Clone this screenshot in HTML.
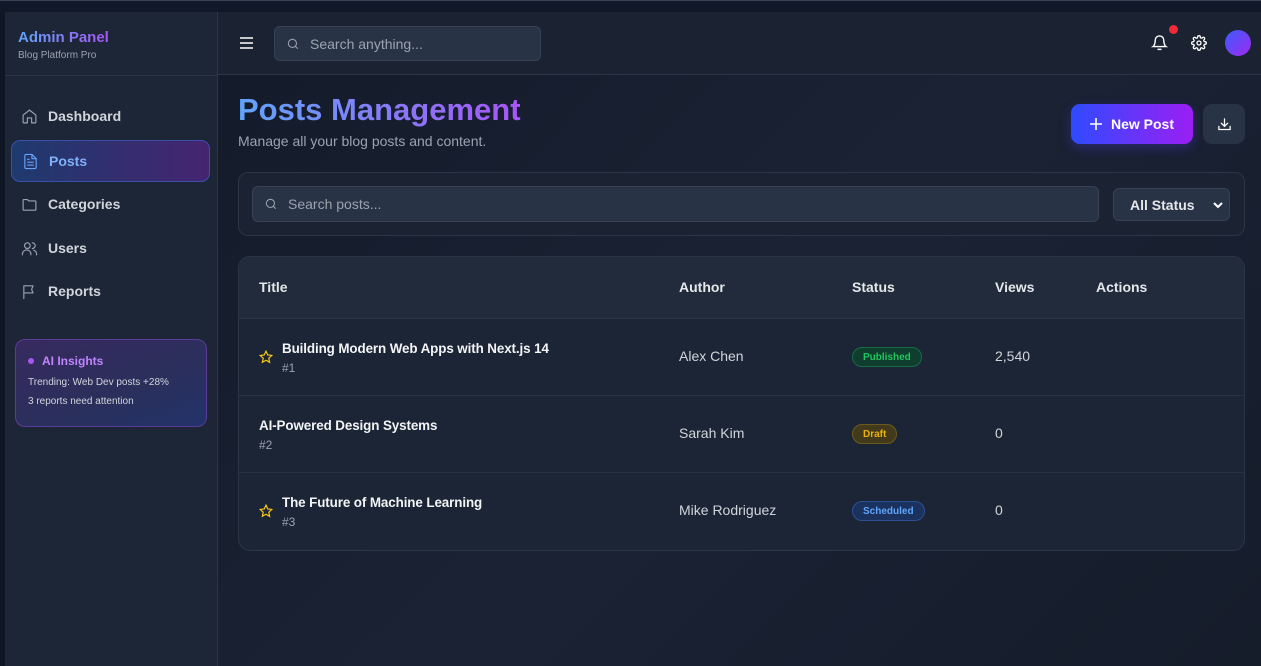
<!DOCTYPE html>
<html><head><meta charset="utf-8"><style>
*{box-sizing:border-box;margin:0;padding:0}
body{width:1261px;height:666px;overflow:hidden;background:#0f1624;font-family:"Liberation Sans",sans-serif;position:relative;color:#e5e7eb}
.top{position:absolute;left:0;top:0;width:1261px;height:12px;background:#111827;border-top:1px solid #3a4356}
.side{position:absolute;left:5px;top:12px;width:213px;height:654px;background:#1d2636;border-right:1px solid #2b3546}
.brand{height:64px;border-bottom:1px solid #2b3546;padding:17px 13px}
.brand h1{font-size:15px;font-weight:bold;background:linear-gradient(90deg,#60a5fa,#a855f7);-webkit-background-clip:text;color:transparent;display:inline-block}
.brand p{font-size:10px;color:#9ca3af;margin-top:3px}
.nav{position:absolute;left:6px;width:199px;height:42px;display:flex;align-items:center;padding-left:10px;font-size:14px;font-weight:bold;color:#d1d5db}
.nav svg{width:17px;height:17px;margin-right:10px;stroke:#9ca3af;fill:none;stroke-width:1.6;stroke-linecap:round;stroke-linejoin:round}
.nav.act{background:linear-gradient(90deg,#1e3a6e,#452470);border:1px solid #3b4fa8;border-radius:9px;color:#7fb0f8}
.nav.act svg{stroke:#6aa2f5}
.ai{position:absolute;left:10px;top:327px;width:192px;height:88px;border:1px solid #5b3a9a;border-radius:10px;background:linear-gradient(160deg,#372a5e,#2a2f5c 60%,#22336a);padding:14px 12px}
.ai b{font-size:12px;color:#c084fc;display:flex;align-items:center}
.ai b:before{content:"";width:6px;height:6px;border-radius:50%;background:#a855f7;margin-right:8px}
.ai p{font-size:10px;color:#d1d5db;margin-top:9px}
.ai p+p{margin-top:8px}
.head{position:absolute;left:218px;top:12px;width:1043px;height:63px;background:#1b2332;border-bottom:1px solid #2b3546}
.srch{position:absolute;background:#283345;border:1px solid #374256;border-radius:6px;display:flex;align-items:center;color:#9ca3af;font-size:14px}
.srch svg{width:14px;height:14px;stroke:#9ca3af;fill:none;stroke-width:1.8;margin:0 10px 0 11px}
.main{position:absolute;left:218px;top:75px;width:1043px;height:591px;background:linear-gradient(135deg,#141c2b,#1a2234 50%,#151c2a)}
h2{position:absolute;left:20px;top:17px;font-size:31px;font-weight:bold;background:linear-gradient(90deg,#60a5fa,#a855f7);-webkit-background-clip:text;color:transparent}
.sub{position:absolute;left:20px;top:58px;font-size:14px;color:#9ca3af}
.btn{position:absolute;left:853px;top:29px;width:122px;height:40px;border-radius:9px;background:linear-gradient(90deg,#2e4bff,#9b1ff3);color:#fff;font-size:14px;font-weight:bold;display:flex;align-items:center;justify-content:center;box-shadow:0 4px 12px rgba(80,60,255,.3)}
.dl{position:absolute;left:985px;top:29px;width:42px;height:40px;border-radius:9px;background:#283345;display:flex;align-items:center;justify-content:center}
.filt{position:absolute;left:20px;top:97px;width:1007px;height:64px;border:1px solid #2b3546;border-radius:10px;background:#1b2332}
.sel{position:absolute;left:874px;top:15px;width:117px;height:33px;background:#283345;border:1px solid #374256;border-radius:6px;font-size:14px;font-weight:bold;color:#e5e7eb;padding:8px 16px}
.tbl{position:absolute;left:20px;top:181px;width:1007px;height:295px;border:1px solid #2b3546;border-radius:12px;background:#1c2535;overflow:hidden}
.th{height:62px;background:#212b3b;border-bottom:1px solid #2b3546;position:relative}
.th span{position:absolute;top:22px;font-size:14px;font-weight:bold;color:#e5e7eb}
.row{height:77px;border-bottom:1px solid #28323f;position:relative}
.row:last-child{border:0}
.t{position:absolute;top:22px;font-size:13.4px;font-weight:bold;color:#f3f4f6;letter-spacing:-.1px}
.t small{display:block;font-size:12px;color:#9ca3af;font-weight:normal;margin-top:5px}
.a{position:absolute;left:440px;top:29px;font-size:14px;color:#d1d5db}
.v{position:absolute;left:756px;top:29px;font-size:14px;color:#d1d5db}
.b{position:absolute;left:613px;top:28px;height:20px;border-radius:10px;font-size:10px;font-weight:bold;padding:4px 10px}
.star{position:absolute;left:20px;top:31px;width:14px;height:14px}
</style></head><body>
<div class="top"></div>
<div class="side">
 <div class="brand"><h1>Admin Panel</h1><p>Blog Platform Pro</p></div>
 <div class="nav" style="top:83px"><svg viewBox="0 0 24 24"><path d="M3 10l9-7 9 7v10a1 1 0 01-1 1h-5v-7H9v7H4a1 1 0 01-1-1z"/></svg>Dashboard</div>
 <div class="nav act" style="top:128px"><svg viewBox="0 0 24 24"><path d="M14 2H6a2 2 0 00-2 2v16a2 2 0 002 2h12a2 2 0 002-2V8z"/><path d="M14 2v6h6M8 13h8M8 17h8M8 9h2"/></svg>Posts</div>
 <div class="nav" style="top:171px"><svg viewBox="0 0 24 24"><path d="M3 6a1 1 0 011-1h5l2 2h9a1 1 0 011 1v11a1 1 0 01-1 1H4a1 1 0 01-1-1z"/></svg>Categories</div>
 <div class="nav" style="top:215px"><svg viewBox="0 0 24 24"><circle cx="9" cy="8" r="4"/><path d="M2 21v-1a6 6 0 0112 0v1M16 4a4 4 0 010 8M22 21v-1a6 6 0 00-4-5.6"/></svg>Users</div>
 <div class="nav" style="top:258px"><svg viewBox="0 0 24 24"><path d="M4 22V4M4 4h13l-2 5 2 5H4"/></svg>Reports</div>
 <div class="ai"><b>AI Insights</b><p>Trending: Web Dev posts +28%</p><p>3 reports need attention</p></div>
</div>
<div class="head">
 <svg style="position:absolute;left:22px;top:25px" width="13" height="12" viewBox="0 0 13 12" stroke="#fff" stroke-width="1.6"><path d="M0 1h13M0 6h13M0 11h13"/></svg>
 <div class="srch" style="left:56px;top:14px;width:267px;height:35px"><svg viewBox="0 0 24 24"><circle cx="11" cy="11" r="7"/><path d="M20 20l-4-4"/></svg>Search anything...</div>
 <svg style="position:absolute;left:933px;top:22px" width="17" height="18" viewBox="0 0 24 24" fill="none" stroke="#fff" stroke-width="2" stroke-linecap="round"><path d="M6 8a6 6 0 0112 0c0 7 3 9 3 9H3s3-2 3-9M10 21h4"/></svg>
 <div style="position:absolute;left:951px;top:13px;width:9px;height:9px;border-radius:50%;background:#ef2b3a"></div>
 <svg style="position:absolute;left:973px;top:23px" width="16" height="16" viewBox="0 0 24 24" fill="none" stroke="#fff" stroke-width="2"><circle cx="12" cy="12" r="3"/><path d="M19.4 15a1.7 1.7 0 00.3 1.8l.1.1a2 2 0 11-2.8 2.8l-.1-.1a1.7 1.7 0 00-1.8-.3 1.7 1.7 0 00-1 1.5V21a2 2 0 11-4 0v-.1a1.7 1.7 0 00-1.1-1.5 1.7 1.7 0 00-1.8.3l-.1.1a2 2 0 11-2.8-2.8l.1-.1a1.7 1.7 0 00.3-1.800 1.7 1.7 0 00-1.5-1H3a2 2 0 110-4h.1a1.7 1.7 0 001.5-1.1 1.7 1.7 0 00-.3-1.8l-.1-.1a2 2 0 112.8-2.8l.1.1a1.7 1.7 0 001.8.3H9a1.7 1.7 0 001-1.5V3a2 2 0 114 0v.1a1.7 1.7 0 001 1.5 1.7 1.7 0 001.8-.3l.1-.1a2 2 0 112.8 2.8l-.1.1a1.7 1.7 0 00-.3 1.8V9a1.7 1.7 0 001.5 1H21a2 2 0 110 4h-.1a1.7 1.7 0 00-1.5 1z"/></svg>
 <div style="position:absolute;left:1007px;top:18px;width:26px;height:26px;border-radius:50%;background:linear-gradient(135deg,#3b5bff,#a22af0)"></div>
</div>
<div class="main">
 <h2>Posts Management</h2>
 <div class="sub">Manage all your blog posts and content.</div>
 <div class="btn"><svg width="12" height="12" viewBox="0 0 12 12" stroke="#fff" stroke-width="1.6" style="margin-right:9px"><path d="M6 0v12M0 6h12"/></svg>New Post</div>
 <div class="dl"><svg width="15" height="15" viewBox="0 0 24 24" fill="none" stroke="#fff" stroke-width="2" stroke-linecap="round"><path d="M12 3v12M7 10l5 5 5-5M3 15v5h18v-5"/></svg></div>
 <div class="filt">
  <div class="srch" style="left:13px;top:13px;width:847px;height:36px"><svg viewBox="0 0 24 24"><circle cx="11" cy="11" r="7"/><path d="M20 20l-4-4"/></svg>Search posts...</div>
  <div class="sel">All Status<svg style="position:absolute;right:6px;top:13px" width="10" height="7" viewBox="0 0 10 7" fill="none" stroke="#fff" stroke-width="2"><path d="M1 1l4 4 4-4"/></svg></div>
 </div>
 <div class="tbl">
  <div class="th"><span style="left:20px">Title</span><span style="left:440px">Author</span><span style="left:613px">Status</span><span style="left:756px">Views</span><span style="left:857px">Actions</span></div>
  <div class="row"><svg class="star" viewBox="0 0 24 24" fill="none" stroke="#facc15" stroke-width="2"><path d="M12 2l3 6.5 7 .8-5.2 4.8 1.4 7L12 17.6 5.8 21l1.4-7L2 9.3l7-.8z"/></svg><div class="t" style="left:43px">Building Modern Web Apps with Next.js 14<small>#1</small></div><div class="a">Alex Chen</div><div class="b" style="background:#0f3d2e;border:1px solid #166b45;color:#22c55e">Published</div><div class="v">2,540</div></div>
  <div class="row"><div class="t" style="left:20px">AI-Powered Design Systems<small>#2</small></div><div class="a">Sarah Kim</div><div class="b" style="background:#43391b;border:1px solid #6b5a1f;color:#eab308">Draft</div><div class="v">0</div></div>
  <div class="row"><svg class="star" viewBox="0 0 24 24" fill="none" stroke="#facc15" stroke-width="2"><path d="M12 2l3 6.5 7 .8-5.2 4.8 1.4 7L12 17.6 5.8 21l1.4-7L2 9.3l7-.8z"/></svg><div class="t" style="left:43px">The Future of Machine Learning<small>#3</small></div><div class="a">Mike Rodriguez</div><div class="b" style="background:#1c325e;border:1px solid #2c4f8f;color:#60a5fa">Scheduled</div><div class="v">0</div></div>
 </div>
</div>
</body></html>
